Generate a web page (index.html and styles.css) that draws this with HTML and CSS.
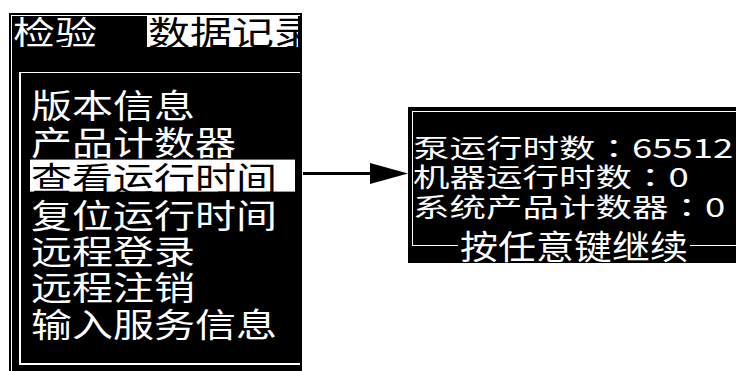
FILE: index.html
```html
<!DOCTYPE html>
<html>
<head>
  <title>运行时间</title>
  <link rel="stylesheet" href="styles.css">
</head>
<body>
  <div class="screen">
    <div class="titlebar">
      <div class="tab tab-on"><span>检验</span></div>
      <div class="tab tab-off"><span>数据记录</span></div>
    </div>
    <div class="screen-body">
      <div class="menu-box">
        <ul class="menu">
          <li>版本信息</li>
          <li>产品计数器</li>
          <li class="selected">查看运行时间</li>
          <li>复位运行时间</li>
          <li>远程登录</li>
          <li>远程注销</li>
          <li>输入服务信息</li>
        </ul>
      </div>
    </div>
  </div>

  <svg class="arrow" width="106" height="22" viewBox="0 0 106 22">
    <line x1="1" y1="10.5" x2="70" y2="10.5" stroke="#000" stroke-width="3"/>
    <polygon points="68,0 106,10.5 68,21" fill="#000"/>
  </svg>

  <div class="readout">
    <div class="readout-box">
      <div class="readout-lines">
        <div>泵运行时数<span class="colon">：</span>65512</div>
        <div>机器运行时数<span class="colon">：</span>0</div>
        <div>系统产品计数器<span class="colon">：</span>0</div>
      </div>
    </div>
    <div class="readout-foot"><span>按任意键继续</span></div>
  </div>
</body>
</html>
```

FILE: styles.css
```css
body {
  margin: 0;
  background: #fff;
  font-family: "Noto Sans CJK SC", sans-serif;
  display: flex;
  align-items: flex-start;
}

/* left: menu screen */
.screen {
  margin: 13px 0 0 9px;
  width: 293px;
  height: 358px;
  box-sizing: border-box;
  border: 2px solid #000;
  border-bottom: none;
  padding: 1px 0 0 1px;
  background: #fff;
  display: flex;
  flex-direction: column;
}
.titlebar {
  display: flex;
  height: 31px;
  background: #000;
}
.tab {
  overflow: hidden;
  white-space: nowrap;
}
.tab span {
  display: block;
  font-size: 42px;
  line-height: 38px;
  padding-left: 1px;
  transform: scaleY(.78);
  transform-origin: 0 0;
}
.tab-on {
  width: 135px;
  color: #fff;
}
.tab-off {
  flex: 1;
  margin-right: 2px;
  background: #fff;
  color: #000;
}
.screen-body {
  flex: 1;
  background: #000;
  padding: 25px 0 0 7px;
}
.menu-box {
  height: 293px;
  box-sizing: border-box;
  border: 2px solid #fff;
  border-top-width: 1px;
  border-right: none;
  padding-top: 13px;
}
.menu {
  list-style: none;
  margin: 0;
  padding: 0;
  color: #fff;
  font-size: 41px;
  line-height: 45.6px;
  white-space: nowrap;
  transform: scaleY(.8);
  transform-origin: 0 0;
}
.menu li {
  margin-left: 9px;
  padding-left: 1px;
}
.menu .selected {
  width: 264px;
  color: #000;
  background: linear-gradient(#fff, #fff) 0 1px / 100% 40px no-repeat;
}

.arrow {
  margin-top: 163px;
  display: block;
}

/* right: run time popup */
.readout {
  flex: 1;
  margin-top: 107px;
  height: 156px;
  box-sizing: border-box;
  padding: 4px 0 0 4px;
  background: #000;
  color: #fff;
  overflow: hidden;
}
.readout-box {
  height: 135px;
  box-sizing: border-box;
  border: 1px solid #fff;
  border-right: none;
  padding-top: 21px;
}
.readout-lines {
  font-size: 36.5px;
  line-height: 40.3px;
  white-space: nowrap;
  transform: scaleY(.72);
  transform-origin: 0 0;
}
.colon {
  font-family: "Noto Sans CJK JP", sans-serif;
}
.readout-foot {
  display: flex;
  justify-content: center;
  margin-top: -16px;
}
.readout-foot span {
  display: block;
  padding: 0 2px;
  background: #000;
  font-size: 38px;
  line-height: 34px;
  transform: scaleY(.88);
  transform-origin: 0 0;
}
```
